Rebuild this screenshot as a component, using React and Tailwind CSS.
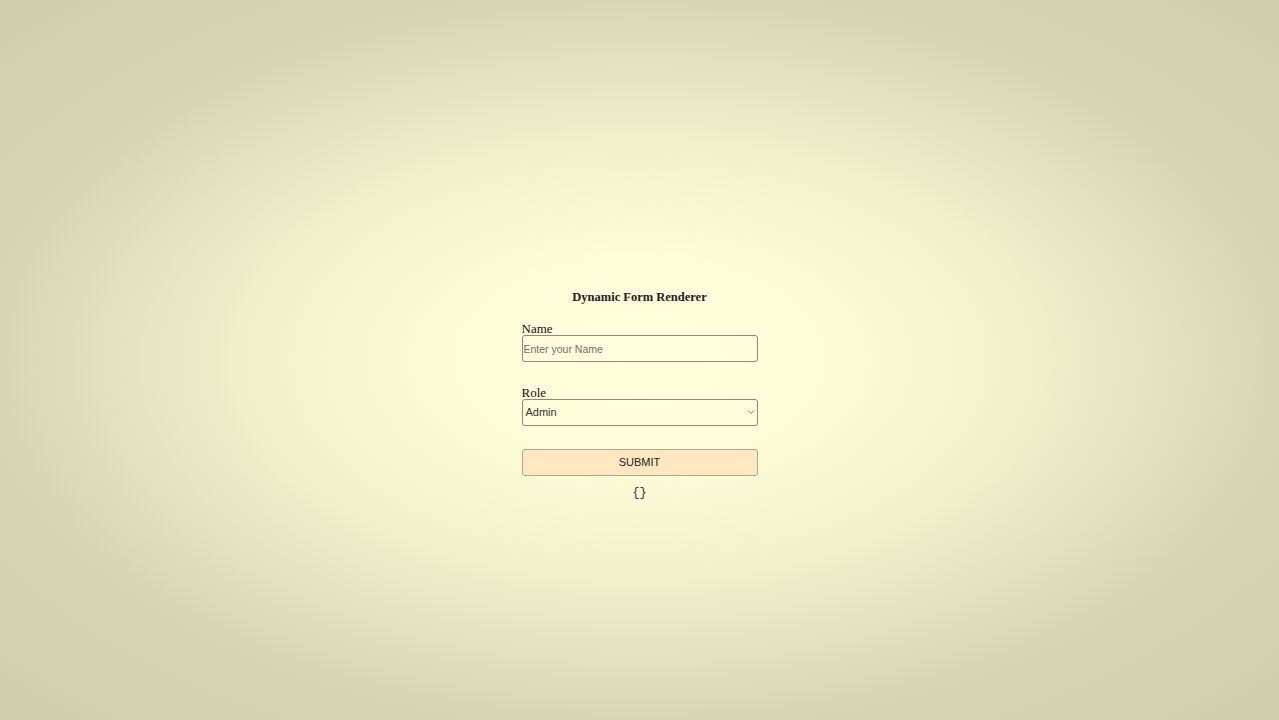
export default function App() {
  return (
    <div className="h-screen w-full flex justify-center overflow-hidden bg-[radial-gradient(ellipse_at_center,#ffffdc_0%,#fdfcd8_20%,#f3f1cd_41%,#e5e4c3_55%,#d6d5b5_71%,#cfceae_100%)] font-['Liberation_Serif',serif] text-[#111]">
      <div className="w-[236px] pt-[290px] flex flex-col">
        <h2 className="text-center font-bold text-[12.5px] leading-[15px] text-[#222]">
          Dynamic Form Renderer
        </h2>

        <div className="mt-[16px] flex flex-col">
          <label className="text-[13px] leading-[15px]">Name</label>
          <input
            type="text"
            placeholder="Enter your Name"
            className="mt-[-1px] h-[27px] w-full rounded-[3px] border border-[#8e8a7a] bg-transparent px-[1px] font-['Liberation_Sans',sans-serif] text-[10.5px] text-[#333] placeholder:text-[#6e6e6e] outline-none"
          />
        </div>

        <div className="mt-[23px] flex flex-col">
          <label className="text-[13px] leading-[15px]">Role</label>
          <div className="relative mt-[-1px]">
            <div className="h-[27px] w-full rounded-[3px] border border-[#8e8a7a] flex items-center px-[3px] font-['Liberation_Sans',sans-serif] text-[11px] text-[#333]">
              Admin
            </div>
            <svg
              className="absolute right-[3px] top-[10px]"
              width="8"
              height="6"
              viewBox="0 0 8 6"
              fill="none"
              stroke="#777"
              strokeWidth="1"
            >
              <path d="M1 1.5 L4 4.5 L7 1.5" />
            </svg>
          </div>
        </div>

        <button className="mt-[23px] h-[27px] w-full rounded-[3px] border border-[#aaa595] bg-[#ffe8bf] font-['Liberation_Sans',sans-serif] text-[11px] text-[#222]">
          SUBMIT
        </button>

        <pre className="mt-[10px] text-center font-['Liberation_Mono',monospace] text-[12px] leading-[15px] text-[#333]">
          {"{}"}
        </pre>
      </div>
    </div>
  );
}
